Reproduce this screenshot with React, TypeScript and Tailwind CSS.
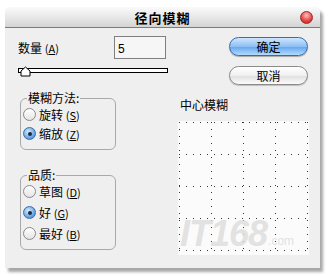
import React from 'react';

const cjk = { fontFamily: '"Noto Sans CJK SC", "Noto Sans", sans-serif' };

function Radio({ label, hotkey, checked }: { label: string; hotkey: string; checked?: boolean }) {
  return (
    <div className="flex items-center h-[19px] gap-[3px]">
      {checked ? (
        <span className="w-[13px] h-[13px] rounded-full border border-[#3a6ea5] bg-[radial-gradient(circle_at_40%_35%,#d7ecff,#5b9be0_70%,#2f6fc0)] flex items-center justify-center">
          <span className="w-[4px] h-[4px] rounded-full bg-[#1a2a40]" />
        </span>
      ) : (
        <span className="w-[13px] h-[13px] rounded-full border border-[#8a8a8a] bg-[linear-gradient(#ffffff,#e4e4e4)]" />
      )}
      <span className="text-[12px] text-black leading-none">
        {label} <span className="text-[11px]">(<span className="underline">{hotkey}</span>)</span>
      </span>
    </div>
  );
}

function Group({ title, children, height }: { title: string; children: React.ReactNode; height: string }) {
  return (
    <fieldset className={`w-[96px] ${height} border border-[#a9a9a9] rounded-[6px] pl-[2px] ml-[2px]`}>
      <legend className="text-[12px] leading-none px-[1px] ml-[4px] text-black">{title}</legend>
      {children}
    </fieldset>
  );
}

function DotGrid() {
  const lines = [0, 1, 2, 3, 4];
  return (
    <svg className="absolute inset-0" width="131" height="134" viewBox="0 0 131 134">
      {lines.map((i) => (
        <line key={`v${i}`} x1={1.5 + i * 32} y1={1} x2={1.5 + i * 32} y2={134} stroke="#333" strokeWidth="1" strokeDasharray="1 6" />
      ))}
      {lines.map((i) => (
        <line key={`h${i}`} x1={1} y1={1.5 + i * 32} x2={131} y2={1.5 + i * 32} stroke="#333" strokeWidth="1" strokeDasharray="1 6" />
      ))}
    </svg>
  );
}

export default function App() {
  return (
    <div className="w-[328px] h-[276px] bg-white pt-[7px] pl-[5px]" style={cjk}>
      <div className="relative w-[315px] h-[261px] rounded-t-[5px] shadow-[3px_4px_3px_rgba(0,0,0,0.35)] bg-[#efefef] flex flex-col">
        {/* title bar */}
        <div className="h-[21px] rounded-t-[5px] bg-[linear-gradient(#fafafa,#e8e8e8_50%,#d4d4d4)] border-b border-[#7c7c7c] flex items-center justify-center relative">
          <span className="text-[13px] font-bold text-black tracking-[1px] leading-none">径向模糊</span>
          <span className="absolute right-[7px] top-[4px] w-[13px] h-[13px] rounded-full border border-[#9a2a2a] bg-[radial-gradient(circle_at_50%_30%,#ffc0c0,#e84a4a_55%,#b81818)]" />
        </div>

        <div className="flex flex-1">
          {/* left column */}
          <div className="w-[168px] pl-[13px] pt-[8px] flex flex-col">
            <div className="flex items-center justify-between w-[148px]">
              <span className="text-[12px] leading-none mt-[1px]">
                数量 <span className="text-[11px]">(<span className="underline">A</span>)</span>
              </span>
              <div className="w-[52px] h-[23px] border border-[#7f7f7f] bg-[#f6f6f6] text-[12px] flex items-center pl-[3px] pt-[2px]" style={{ fontFamily: '"Liberation Sans", sans-serif' }}>
                5
              </div>
            </div>
            <div className="relative mt-[9px] w-[150px] h-[5px] border border-black bg-white">
              <svg className="absolute left-[1px] -top-[3px]" width="11" height="11" viewBox="0 0 11 11">
                <path d="M1 5 L5.5 1 L10 5 L10 10 L1 10 Z" fill="#ffffff" stroke="#000" strokeWidth="1" />
              </svg>
            </div>

            <div className="mt-[19px]">
              <Group title="模糊方法:" height="h-[58px]">
                <div className="pt-[1px]">
                  <Radio label="旋转" hotkey="S" />
                  <Radio label="缩放" hotkey="Z" checked />
                </div>
              </Group>
            </div>

            <div className="mt-[19px]">
              <Group title="品质:" height="h-[81px]">
                <div className="pt-[1px] flex flex-col gap-[2px]">
                  <Radio label="草图" hotkey="D" />
                  <Radio label="好" hotkey="G" checked />
                  <Radio label="最好" hotkey="B" />
                </div>
              </Group>
            </div>
          </div>

          {/* right column */}
          <div className="flex-1 flex flex-col relative">
            <div className="flex flex-col items-end pr-[12px] pt-[9px] gap-[10px]">
              <button className="w-[79px] h-[19px] rounded-full border border-[#3c6aa8] bg-[linear-gradient(#cfe6ff,#8dc0f5_50%,#6aa9ee_55%,#b2dbff)] text-[12px] leading-none text-black shadow-[0_1px_1px_rgba(0,0,0,0.3)]">
                确定
              </button>
              <button className="w-[79px] h-[19px] rounded-full border border-[#8a8a8a] bg-[linear-gradient(#ffffff,#f0f0f0_50%,#e2e2e2_55%,#fbfbfb)] text-[12px] leading-none text-black shadow-[0_1px_1px_rgba(0,0,0,0.2)]">
                取消
              </button>
            </div>
            <div className="pl-[7px] mt-[14px] text-[12px] leading-none">中心模糊</div>
            <div className="ml-[5px] mt-[10px] w-[131px] h-[134px] bg-[#fbfbfb] relative overflow-hidden">
              <DotGrid />
              <div className="absolute left-[2px] bottom-[3px] flex items-end text-[#dcdcdc] opacity-80" style={{ fontFamily: '"Liberation Sans", sans-serif' }}>
                <span className="text-[36px] font-bold italic leading-none tracking-[-1px]">IT168</span>
                <span className="text-[12px] mb-[2px] ml-[1px]">.com</span>
              </div>
            </div>
          </div>
        </div>
      </div>
    </div>
  );
}
